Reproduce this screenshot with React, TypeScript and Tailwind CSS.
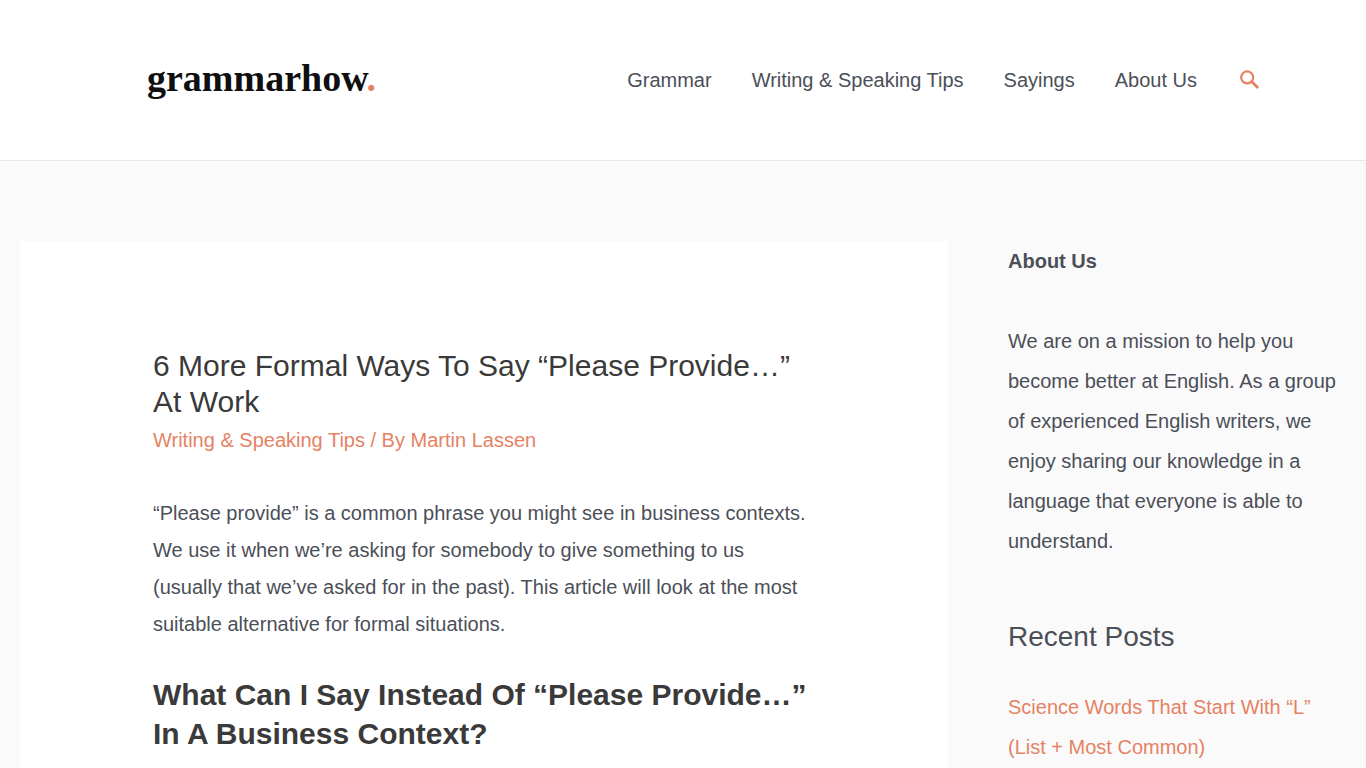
const navItems = ["Grammar", "Writing & Speaking Tips", "Sayings", "About Us"];

function Logo() {
  return (
    <a href="#" aria-label="grammarhow home" className="pb-1 font-['Liberation_Serif',serif] text-[38px] leading-10 font-bold text-[#0f0f0f]">
      grammarhow<span className="text-[#e58264]">.</span>
    </a>
  );
}

function Header() {
  return (
    <header className="border-b border-[#e8e8e8] bg-white">
      <div className="mx-auto flex h-40 max-w-[1240px] items-center justify-between pr-[126px] pl-[84px] xl:pr-[42px]">
        <Logo />
        <nav className="flex items-center gap-10">
          {navItems.map((item) => (
            <a key={item} href="#" className="whitespace-nowrap">
              {item}
            </a>
          ))}
          <button type="button" aria-label="Search" className="text-[#e58264]">
            <svg viewBox="0 0 24 24" className="size-6" fill="none" stroke="currentColor">
              <circle cx="10.2" cy="9.4" r="6" strokeWidth="2.2" />
              <path d="M14.6 13.6l6.5 6.5" strokeWidth="2.8" />
            </svg>
          </button>
        </nav>
      </div>
    </header>
  );
}

export default function App() {
  return (
    <div className="h-screen overflow-hidden bg-[#fafafa] font-['Liberation_Sans',Arial,sans-serif] text-xl text-[#4b4f58]">
      <Header />
      <div className="flex px-5 pt-20">
        <main className="min-w-0 flex-1 bg-white px-[133px] pt-[107px] pb-20">
          <article>
            <h1 className="text-[30px] leading-9 text-[#3a3a3a]">6 More Formal Ways To Say “Please Provide…” At Work</h1>
            <p className="leading-10 text-[#e58264]">
              <a href="#">Writing &amp; Speaking Tips</a> / By <a href="#">Martin Lassen</a>
            </p>
            <p className="mt-[35px] leading-[37px]">
              “Please provide” is a common phrase you might see in business contexts. We use it when we’re asking for somebody to give something to us (usually that we’ve asked for in the past). This article will look at the most suitable alternative for formal situations.
            </p>
            <h2 className="mt-8 text-3xl leading-[39px] font-bold text-[#3a3a3a]">What Can I Say Instead Of “Please Provide…” In A Business Context?</h2>
          </article>
        </main>
        <aside className="w-[398px] shrink-0 pl-[60px] leading-10">
          <h2 className="font-bold">About Us</h2>
          <p className="mt-10">
            We are on a mission to help you become better at English. As a group of experienced English writers, we enjoy sharing our knowledge in a language that everyone is able to understand.
          </p>
          <h2 className="mt-14 text-[28px] leading-10">Recent Posts</h2>
          <a href="#" className="mt-[30px] block text-[#e58264]">Science Words That Start With “L” (List + Most Common)</a>
        </aside>
      </div>
    </div>
  );
}
